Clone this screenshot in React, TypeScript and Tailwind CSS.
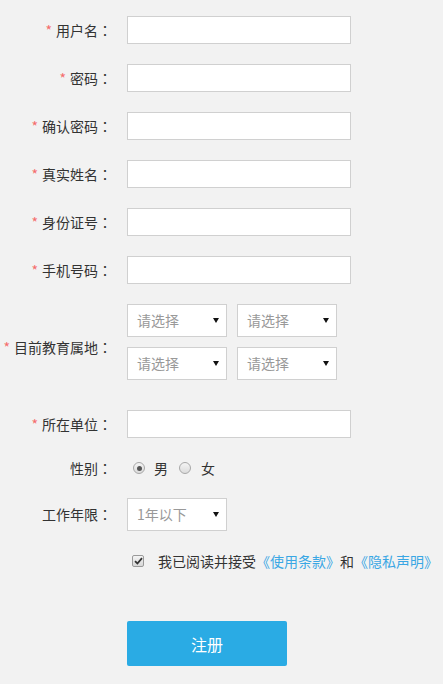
import React from "react";

const font = { fontFamily: '"Noto Sans CJK SC", "Noto Sans", sans-serif' };
const tc = { fontFamily: '"Noto Sans CJK TC", "Noto Sans CJK SC", sans-serif' };

function Label({ text, required = true }: { text: string; required?: boolean }) {
  return (
    <div className="w-[112px] shrink-0 text-right text-[14px] text-[#333] whitespace-nowrap">
      {required && <span className="text-[#f56c6c] mr-[4px]">*</span>}
      {text}
      <span style={tc}>：</span>
    </div>
  );
}

function Input() {
  return <div className="ml-[15px] w-[224px] h-[28px] bg-white border border-[#d0d0d0]" />;
}

function Arrow() {
  return (
    <svg width="6" height="5" viewBox="0 0 6 5" className="block">
      <polygon points="0,0 6,0 3,5" fill="#111" />
    </svg>
  );
}

function Select({ text }: { text: string }) {
  return (
    <div className="w-[100px] h-[33px] bg-white border border-[#d0d0d0] flex items-center justify-between pl-[9px] pr-[7px]">
      <span className="text-[14px] text-[#999]">{text}</span>
      <Arrow />
    </div>
  );
}

function Radio({ checked }: { checked?: boolean }) {
  return (
    <span className="w-[12px] h-[12px] rounded-full border border-[#a8a8a8] bg-gradient-to-b from-[#f4f4f4] to-[#dcdcdc] flex items-center justify-center">
      {checked && <span className="w-[5px] h-[5px] rounded-full bg-[#555]" />}
    </span>
  );
}

export default function App() {
  return (
    <div className="w-[443px] h-[684px] bg-[#f2f2f2] pt-[16px]" style={font}>
      {["用户名", "密码", "确认密码", "真实姓名", "身份证号", "手机号码"].map((t) => (
        <div key={t} className="flex items-center mb-[20px]">
          <Label text={t} />
          <Input />
        </div>
      ))}
      <div className="flex items-center mb-[20px]">
        <Label text="目前教育属地" />
        <div className="ml-[15px] flex flex-col">
          {[0, 1].map((i) => (
            <div key={i} className="flex gap-[10px] mb-[10px]">
              <Select text="请选择" />
              <Select text="请选择" />
            </div>
          ))}
        </div>
      </div>
      <div className="flex items-center mb-[20px]">
        <Label text="所在单位" />
        <Input />
      </div>
      <div className="flex items-center h-[20px] mb-[20px]">
        <Label text="性别" required={false} />
        <div className="ml-[21px] flex items-center text-[14px] text-[#333]">
          <Radio checked />
          <span className="ml-[9px]">男</span>
          <span className="ml-[11px]"><Radio /></span>
          <span className="ml-[10px]">女</span>
        </div>
      </div>
      <div className="flex items-center mb-[20px]">
        <Label text="工作年限" required={false} />
        <div className="ml-[15px]">
          <Select text="1年以下" />
        </div>
      </div>
      <div className="flex items-center h-[20px]">
        <div className="w-[132px] shrink-0" />
        <span className="w-[12px] h-[12px] rounded-[2px] border border-[#9a9a9a] bg-gradient-to-b from-[#f4f4f4] to-[#d8d8d8] flex items-center justify-center">
          <svg width="9" height="8" viewBox="0 0 9 8">
            <path d="M1 4.2 L3.4 6.5 L8 1.2" stroke="#333" strokeWidth="1.8" fill="none" />
          </svg>
        </span>
        <span className="ml-[14px] text-[14px] text-[#333] whitespace-nowrap">
          我已阅读并接受<span className="text-[#3aa7e4]">《使用条款》</span>和<span className="text-[#3aa7e4]">《隐私声明》</span>
        </span>
      </div>
      <div className="flex mt-[50px]">
        <div className="w-[127px] shrink-0" />
        <button className="w-[160px] h-[45px] rounded-[2px] bg-[#2aabe4] text-white text-[16px]">注册</button>
      </div>
    </div>
  );
}
